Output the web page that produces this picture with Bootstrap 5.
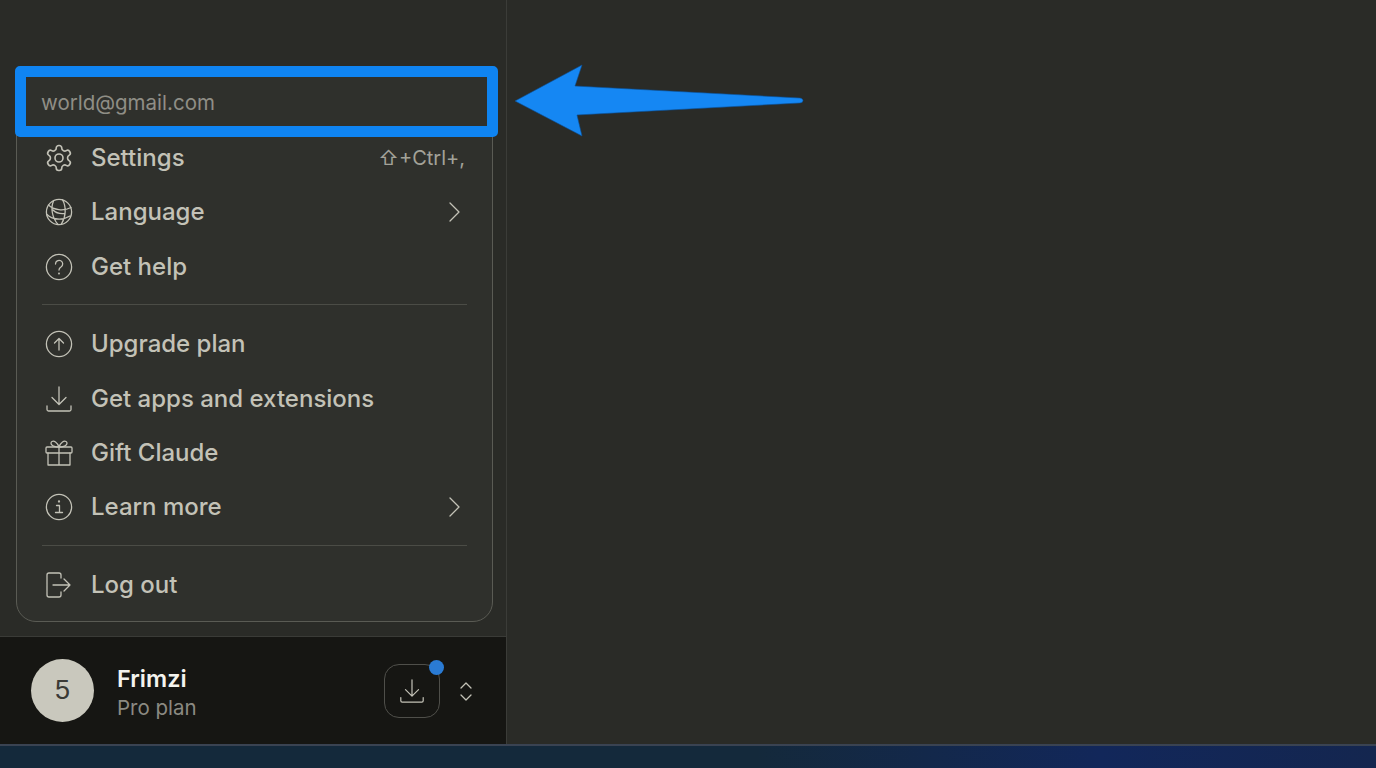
<!DOCTYPE html>
<html lang="en">
<head>
<meta charset="UTF-8">
<meta name="viewport" content="width=device-width, initial-scale=1.0">
<title>Account menu</title>
<link rel="stylesheet" href="https://cdn.jsdelivr.net/npm/bootstrap@5.3.0/dist/css/bootstrap.min.css">
<style>
    html, body { height: 100%; }
    body { background: #2a2b27; font-family: "Inter", "Liberation Sans", sans-serif; overflow: hidden; }
    .app-shell { height: 768px; position: relative; }
    .app-main { height: 744px; }
    .side-panel { width: 507px; background: #2a2b27; border-right: 1px solid #3b3c38; }
    .menu-area { padding: 0 13px 14px 16px; }
    .menu-box { background: #2f302c; border: 1px solid #5a5b54; border-radius: 4px 4px 20px 20px; padding: 2px 0 9px; }
    .menu-email { height: 54px; padding: 0 0 2px 24px; font-size: 20.5px; color: #8f8e86; }
    .menu-row { height: 54.4px; padding: 0 29px 0 27px; color: #c3c2b7; font-size: 24px; font-weight: 500; gap: 17px; }
    .menu-row svg { flex: none; }
    .menu-line { margin: 10px 25px 12px; height: 1px; background: #4b4c46; }
    .key-hint { font-size: 20px; font-weight: 400; color: #a3a299; font-family: "Inter", "DejaVu Sans", sans-serif; margin-right: -2px; }
    .ico { fill: none; stroke: #c3c2b7; stroke-width: 1.3; stroke-linecap: round; stroke-linejoin: round; }
    .foot-bar { height: 108px; background: #161613; border-top: 1px solid #3a3b37; padding: 0 33px 0 31px; }
    .avatar-circle { width: 63px; height: 63px; flex: none; border-radius: 50%; background: #c9c8bd; color: #3a3a36; font-size: 27px; font-family: "Liberation Sans", sans-serif; }
    .user-block { margin-left: 23px; padding-top: 4px; }
    .user-name { font-size: 23.5px; font-weight: 600; color: #f4f3ee; line-height: 29px; }
    .user-plan { font-size: 20.5px; color: #8b8a82; line-height: 29px; }
    .dl-btn { width: 56px; height: 54px; border: 1px solid #4f4f4a; border-radius: 15px; position: relative; }
    .dl-dot { position: absolute; top: -5px; right: -5px; width: 15px; height: 15px; border-radius: 50%; background: #2a7bd4; }
    .updown-ico { margin-left: 19px; }
    .bottom-strip { height: 24px; background: linear-gradient(90deg, #14293b 0%, #14293b 55%, #12275a 80%, #14264f 100%); border-top: 2px solid #3a4352; }
    .focus-box { position: absolute; left: 15px; top: 66px; width: 483px; height: 71px; border: 11px solid #0f84f2; border-radius: 5px; }
    .focus-arrow { position: absolute; left: 510px; top: 60px; }
</style>
</head>
<body>
<div class="app-shell">
    <div class="app-main d-flex">
        <div class="side-panel d-flex flex-column">
            <div class="menu-area flex-grow-1 d-flex flex-column justify-content-end">
                <div class="menu-box">
                    <div class="menu-email d-flex align-items-center">world@gmail.com</div>

                    <div class="menu-row d-flex align-items-center">
                        <svg class="ico" width="30" height="30" viewBox="0 0 24 24"><path d="M12.22 2h-.44a2 2 0 0 0-2 2v.18a2 2 0 0 1-1 1.73l-.43.25a2 2 0 0 1-2 0l-.15-.08a2 2 0 0 0-2.73.73l-.22.38a2 2 0 0 0 .73 2.73l.15.1a2 2 0 0 1 1 1.72v.51a2 2 0 0 1-1 1.74l-.15.09a2 2 0 0 0-.73 2.73l.22.38a2 2 0 0 0 2.73.73l.15-.08a2 2 0 0 1 2 0l.43.25a2 2 0 0 1 1 1.73V20a2 2 0 0 0 2 2h.44a2 2 0 0 0 2-2v-.18a2 2 0 0 1 1-1.73l.43-.25a2 2 0 0 1 2 0l.15.08a2 2 0 0 0 2.73-.73l.22-.39a2 2 0 0 0-.73-2.73l-.15-.08a2 2 0 0 1-1-1.74v-.5a2 2 0 0 1 1-1.74l.15-.09a2 2 0 0 0 .73-2.73l-.22-.38a2 2 0 0 0-2.73-.73l-.15.08a2 2 0 0 1-2 0l-.43-.25a2 2 0 0 1-1-1.73V4a2 2 0 0 0-2-2z"/><circle cx="12" cy="12" r="3.2"/></svg>
                        <span class="flex-grow-1">Settings</span>
                        <span class="key-hint">⇧+Ctrl+,</span>
                    </div>
                    <div class="menu-row d-flex align-items-center">
                        <svg class="ico" width="30" height="30" viewBox="0 0 30 30"><circle cx="15" cy="15" r="12.6"/><path d="M9.500 4c-3 7-1.500 16.500 4.500 23.500M18.500 2.700c4 7 3.500 17-1 24.200M4.500 8c5 5 15 6.500 22.500 2.500M3 17.500c5 5 15 6.500 23 1.500M9 13c3 3 8 4 12 3.500"/></svg>
                        <span class="flex-grow-1">Language</span>
                        <svg class="ico" width="16" height="22" viewBox="0 0 16 22"><path d="M3 2l9 9-9 9"/></svg>
                    </div>
                    <div class="menu-row d-flex align-items-center">
                        <svg class="ico" width="30" height="30" viewBox="0 0 30 30"><circle cx="15" cy="15" r="12.6"/><path d="M11.500 12a3.600 3.600 0 1 1 5.500 3c-1.300.8-2 1.500-2 3"/><circle cx="15" cy="21.500" r=".4"/></svg>
                        <span>Get help</span>
                    </div>

                    <div class="menu-line"></div>

                    <div class="menu-row d-flex align-items-center">
                        <svg class="ico" width="30" height="30" viewBox="0 0 30 30"><circle cx="15" cy="15" r="12.6"/><path d="M15 21V9.500M10.500 14l4.500-4.500 4.500 4.500"/></svg>
                        <span>Upgrade plan</span>
                    </div>
                    <div class="menu-row d-flex align-items-center">
                        <svg class="ico" width="30" height="30" viewBox="0 0 30 30"><path d="M15 3v17M8 13.500l7 7 7-7M3 22v3.500a1.500 1.500 0 0 0 1.500 1.500h21a1.500 1.500 0 0 0 1.500-1.500V22"/></svg>
                        <span>Get apps and extensions</span>
                    </div>
                    <div class="menu-row d-flex align-items-center">
                        <svg class="ico" width="30" height="30" viewBox="0 0 30 30"><rect x="2" y="9" width="26" height="6" rx="1"/><path d="M4 15v12h22V15M15 9v18M15 9c-2-5-5-6.500-7-5.500S6.500 9 15 9zM15 9c2-5 5-6.500 7-5.500S23.500 9 15 9z"/></svg>
                        <span>Gift Claude</span>
                    </div>
                    <div class="menu-row d-flex align-items-center">
                        <svg class="ico" width="30" height="30" viewBox="0 0 30 30"><circle cx="15" cy="15" r="12.6"/><path d="M12.500 13.500H15.500V20M11.500 20.500h7"/><circle cx="15" cy="9.500" r=".5"/></svg>
                        <span class="flex-grow-1">Learn more</span>
                        <svg class="ico" width="16" height="22" viewBox="0 0 16 22"><path d="M3 2l9 9-9 9"/></svg>
                    </div>

                    <div class="menu-line"></div>

                    <div class="menu-row d-flex align-items-center">
                        <svg class="ico" width="30" height="30" viewBox="0 0 30 30"><path d="M17 8V5a2 2 0 0 0-2-2H5a2 2 0 0 0-2 2v20a2 2 0 0 0 2 2h10a2 2 0 0 0 2-2v-3M9 15h17M20 9l6 6-6 6"/></svg>
                        <span>Log out</span>
                    </div>
                </div>
            </div>

            <div class="foot-bar d-flex align-items-center">
                <div class="avatar-circle d-flex align-items-center justify-content-center">5</div>
                <div class="user-block flex-grow-1">
                    <div class="user-name">Frimzi</div>
                    <div class="user-plan">Pro plan</div>
                </div>
                <div class="dl-btn d-flex align-items-center justify-content-center">
                    <svg class="ico" width="28" height="28" viewBox="0 0 30 30"><path d="M15 3v17M8 13.500l7 7 7-7M3 22v3.500a1.500 1.500 0 0 0 1.500 1.500h21a1.500 1.500 0 0 0 1.500-1.500V22"/></svg>
                    <span class="dl-dot"></span>
                </div>
                <svg class="ico updown-ico" width="14" height="24" viewBox="0 0 14 24"><path d="M2 9l5-5 5 5M2 16l5 5 5-5"/></svg>
            </div>
        </div>
        <div class="flex-grow-1"></div>
    </div>
    <div class="bottom-strip"></div>

    <div class="focus-box"></div>
    <svg class="focus-arrow" width="300" height="84" viewBox="510 60 300 84">
        <path fill="#1587f3" stroke="#0b4f94" stroke-width=".6" d="M515 101L582 65 575 86 800 98Q803 98.500 803 100.500 803 102.500 800 103L577 115 582 136z"/>
    </svg>
</div>
<script src="https://cdn.jsdelivr.net/npm/bootstrap@5.3.0/dist/js/bootstrap.bundle.min.js"></script>
</body>
</html>
